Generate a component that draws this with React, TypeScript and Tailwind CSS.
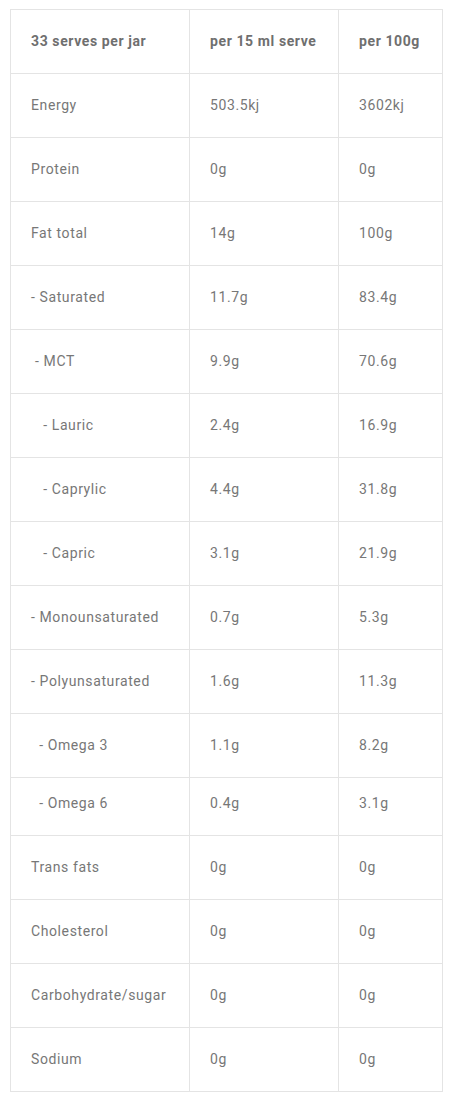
const rows: [string, string, string, string?][] = [
  ['Energy', '503.5kj', '3602kj'],
  ['Protein', '0g', '0g'],
  ['Fat total', '14g', '100g'],
  ['- Saturated', '11.7g', '83.4g'],
  ['\u00a0- MCT', '9.9g', '70.6g'],
  ['\u00a0\u00a0\u00a0- Lauric', '2.4g', '16.9g'],
  ['\u00a0\u00a0\u00a0- Caprylic', '4.4g', '31.8g'],
  ['\u00a0\u00a0\u00a0- Capric', '3.1g', '21.9g'],
  ['- Monounsaturated', '0.7g', '5.3g'],
  ['- Polyunsaturated', '1.6g', '11.3g'],
  ['\u00a0\u00a0- Omega 3', '1.1g', '8.2g'],
  ['\u00a0\u00a0- Omega 6', '0.4g', '3.1g', 'h-[58px] pb-[6px]'],
  ['Trans fats', '0g', '0g'],
  ['Cholesterol', '0g', '0g'],
  ['Carbohydrate/sugar', '0g', '0g'],
  ['Sodium', '0g', '0g'],
];

const cell = 'border border-[#e4e4e4] pl-[20px] pr-2 text-left align-middle';

export default function App() {
  return (
    <div className="bg-white pt-[9px] pl-[10px]" style={{ fontFamily: 'Roboto, "Liberation Sans", sans-serif' }}>
      <table className="w-[432px] table-fixed border-collapse text-[14px] tracking-[0.6px] text-[#777]">
        <colgroup>
          <col className="w-[179px]" />
          <col className="w-[149px]" />
          <col className="w-[104px]" />
        </colgroup>
        <thead>
          <tr>
            <th className={cell + ' h-[64px] font-bold text-[#6f6f6f]'}>33 serves per jar</th>
            <th className={cell + ' h-[64px] font-bold text-[#6f6f6f]'}>per 15 ml serve</th>
            <th className={cell + ' h-[64px] font-bold text-[#6f6f6f]'}>per 100g</th>
          </tr>
        </thead>
        <tbody>
          {rows.map(([name, serve, per100, h = 'h-[64px]']) => (
            <tr key={name}>
              <td className={cell + ' whitespace-pre ' + h}>{name}</td>
              <td className={cell + ' ' + h}>{serve}</td>
              <td className={cell + ' ' + h}>{per100}</td>
            </tr>
          ))}
        </tbody>
      </table>
    </div>
  );
}
